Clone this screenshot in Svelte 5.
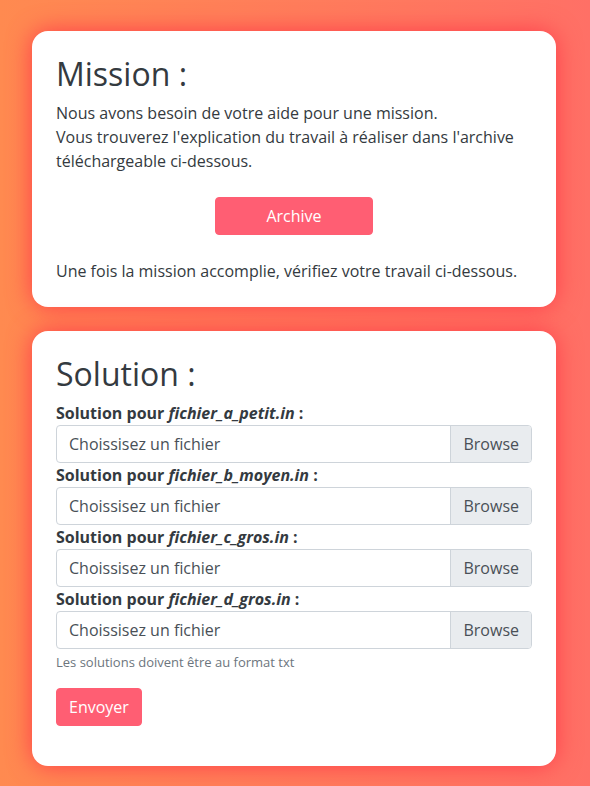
<script>
  const files = ['fichier_a_petit.in', 'fichier_b_moyen.in', 'fichier_c_gros.in', 'fichier_d_gros.in'];
  let names = $state(files.map(() => ''));

  function choose(event, i) {
    names[i] = event.currentTarget.files[0]?.name ?? '';
  }
</script>

<main>
  <section class="card">
    <h2>Mission :</h2>
    <p>
      Nous avons besoin de votre aide pour une mission.<br />
      Vous trouverez l'explication du travail à réaliser dans l'archive téléchargeable ci-dessous.
    </p>
    <a class="btn archive" href="#archive">Archive</a>
    <p>Une fois la mission accomplie, vérifiez votre travail ci-dessous.</p>
  </section>

  <section class="card">
    <h2>Solution :</h2>
    <form>
      {#each files as file, i}
        <label class="title" for="file-{i}">Solution pour <em>{file}</em> :</label>
        <div class="picker">
          <input type="file" id="file-{i}" onchange={(e) => choose(e, i)} />
          <span class="name">{names[i] || 'Choissisez un fichier'}</span>
          <span class="browse">Browse</span>
        </div>
      {/each}
      <small>Les solutions doivent être au format txt</small>
      <button class="btn" type="submit">Envoyer</button>
    </form>
  </section>
</main>

<style>
  :global(body) {
    margin: 0;
  }

  main {
    box-sizing: border-box;
    min-height: 100vh;
    padding: 31px 34px 20px 32px;
    display: flex;
    flex-direction: column;
    gap: 24px;
    background: linear-gradient(to right, #ff8a50, #ff7066);
    color: #343a40;
    font: 16px/24px "Open Sans", sans-serif;
  }

  .card {
    padding: 24px;
    border-radius: 16px;
    background: #fff;
    box-shadow: 0 0 24px #ff3d4a;
  }

  h2 {
    margin: 0 0 8px;
    font-size: 32px;
    line-height: 38px;
    font-weight: 400;
  }

  p {
    margin: 0;
  }

  .btn {
    box-sizing: border-box;
    display: block;
    height: 38px;
    padding: 6px 12px;
    border: 1px solid #ff5e73;
    border-radius: 4px;
    background: #ff5e73;
    color: #fff;
    font: inherit;
    text-align: center;
    text-decoration: none;
    cursor: pointer;
  }

  .archive {
    width: 33.333%;
    margin: 24px auto;
  }

  .title {
    display: block;
    font-weight: 700;
  }

  .picker {
    position: relative;
    box-sizing: border-box;
    display: flex;
    height: 38px;
    border: 1px solid #ced4da;
    border-radius: 4px;
    overflow: hidden;
    color: #495057;
  }

  .picker:focus-within {
    border-color: #ff5e73;
  }

  .picker input {
    position: absolute;
    inset: 0;
    width: 100%;
    opacity: 0;
    cursor: pointer;
  }

  .name {
    flex: 1;
    padding: 6px 12px;
  }

  .browse {
    padding: 6px 12px;
    border-left: 1px solid #ced4da;
    background: #e9ecef;
  }

  small {
    display: block;
    margin: 4px 0 16px;
    color: #6c757d;
    font-size: 13px;
    line-height: 19px;
  }

  form {
    margin-bottom: 16px;
  }
</style>
